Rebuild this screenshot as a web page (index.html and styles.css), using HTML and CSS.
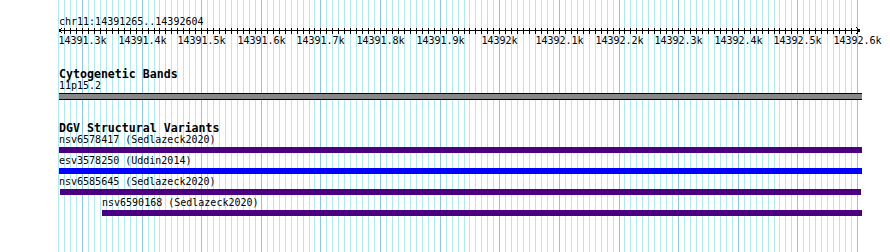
FILE: index.html
```html
<!DOCTYPE html>
<html lang="en">
<head>
  <meta charset="UTF-8" />
  <title>Genome View</title>
  <link rel="stylesheet" href="styles.css">
</head>
<body>

  <div class="view">
    <!-- vertical grid behind the tracks -->
    <svg class="grid" id="grid" width="890" height="252"></svg>

    <div class="ruler">
      <div class="locus">chr11:14391265..14392604</div>
      <svg class="scale" id="scale" width="890" height="40"></svg>
    </div>

    <div class="track">
      <div class="track-title">Cytogenetic Bands</div>
      <div class="feature">
        <div class="label">11p15.2</div>
        <div class="band" style="margin-left: 0; width: 803px;"></div>
      </div>
    </div>

    <div class="track track-dgv">
      <div class="track-title">DGV Structural Variants</div>
      <div class="feature">
        <div class="label">nsv6578417 (Sedlazeck2020)</div>
        <div class="bar loss" style="margin-left: 0; width: 803px;"></div>
      </div>
      <div class="feature">
        <div class="label">esv3578250 (Uddin2014)</div>
        <div class="bar gain" style="margin-left: 0; width: 803px;"></div>
      </div>
      <div class="feature">
        <div class="label">nsv6585645 (Sedlazeck2020)</div>
        <div class="bar loss" style="margin-left: 1px; width: 801px;"></div>
      </div>
      <div class="feature" style="padding-left: 43px;">
        <div class="label">nsv6590168 (Sedlazeck2020)</div>
        <div class="bar loss" style="width: 760px;"></div>
      </div>
    </div>
  </div>

  <script>
    const NS = 'http://www.w3.org/2000/svg';
    const start = 14391260;
    const end = 14392600;

    function bpToX(bp) {
      return Math.round(82 + (bp - 14391300) * 0.59615) + 0.5;
    }

    function line(svg, x1, y1, x2, y2, cls) {
      const l = document.createElementNS(NS, 'line');
      l.setAttribute('x1', x1);
      l.setAttribute('y1', y1);
      l.setAttribute('x2', x2);
      l.setAttribute('y2', y2);
      l.setAttribute('class', cls);
      svg.appendChild(l);
    }

    const grid = document.getElementById('grid');
    const scale = document.getElementById('scale');

    for (let bp = start; bp <= end; bp += 10) {
      const x = bpToX(bp);
      const major = bp % 100 === 0;
      line(grid, x, 0, x, 252, major ? 'major' : 'minor');
      if (bp > start) line(scale, x, -0.5, x, 5.5, 'tick');

      if (major) {
        const t = document.createElementNS(NS, 'text');
        t.setAttribute('x', x);
        t.setAttribute('y', 15.5);
        t.setAttribute('class', 'tick-label');
        t.textContent = (bp / 1000) + 'k';
        scale.appendChild(t);
      }
    }

    // ruler line with arrows at both ends
    line(scale, 59, 2.5, 860, 2.5, 'tick');
    line(scale, 59, 2.5, 62.5, -0.5, 'tick');
    line(scale, 59, 2.5, 62.5, 5.5, 'tick');
    line(scale, 860, 2.5, 856.5, -0.5, 'tick');
    line(scale, 860, 2.5, 856.5, 5.5, 'tick');
  </script>

</body>
</html>
```

FILE: styles.css
```css
body {
  margin: 0;
  background: #ffffff;
  color: #000000;
  font-family: 'DejaVu Sans Mono', monospace;
  font-size: 10px;
  line-height: 12px;
}

.view {
  position: relative;
  width: 890px;
  height: 252px;
  overflow: hidden;
}

.grid {
  position: absolute;
  top: 0;
  left: 0;
}

.grid .minor {
  stroke: #aeeaee;
  stroke-width: 1;
}

.grid .major {
  stroke: #8cc6e6;
  stroke-width: 1;
}

.ruler {
  position: relative;
  padding-top: 16px;
}

.locus {
  padding-left: 59px;
  height: 12px;
}

.scale {
  display: block;
  overflow: visible;
}

.scale .tick {
  stroke: #000000;
  stroke-width: 1;
  shape-rendering: crispEdges;
}

.tick-label {
  font-family: 'DejaVu Sans Mono', monospace;
  font-size: 10px;
  text-anchor: middle;
  fill: #000000;
}

.track {
  position: relative;
  padding-left: 59px;
}

.track-dgv {
  margin-top: 22px;
}

.track-title {
  font-weight: bold;
  font-size: 11.6px;
  height: 12px;
}

.label {
  height: 12px;
  white-space: nowrap;
}

.band {
  margin-top: 1px;
  height: 5px;
  background: #888888;
  border-top: 1px solid #000000;
  border-bottom: 1px solid #000000;
}

.feature {
  margin-bottom: 2px;
}

.bar {
  margin-top: 1px;
  height: 6px;
}

.bar.loss {
  background: #4b0082;
}

.bar.gain {
  background: #0000ff;
}
```
